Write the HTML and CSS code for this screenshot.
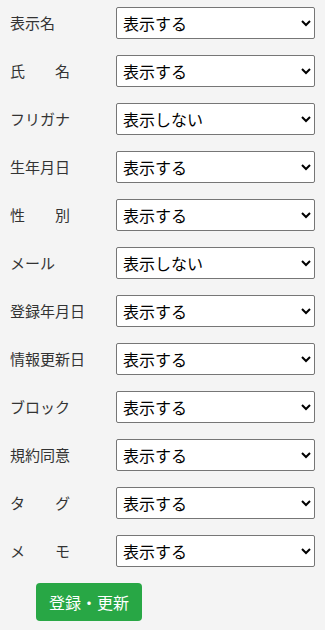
FILE: index.html
```html
<!DOCTYPE html>
<html lang="ja">
<head>
<meta charset="utf-8">
<link rel="stylesheet" href="styles.css">
</head>
<body>
<form class="form">
  <div class="row"><label class="label">表示名</label><select class="sel"><option>表示する</option><option>表示しない</option></select></div>
  <div class="row"><label class="label">氏　　名</label><select class="sel"><option>表示する</option><option>表示しない</option></select></div>
  <div class="row"><label class="label">フリガナ</label><select class="sel"><option>表示する</option><option selected>表示しない</option></select></div>
  <div class="row"><label class="label">生年月日</label><select class="sel"><option>表示する</option><option>表示しない</option></select></div>
  <div class="row"><label class="label">性　　別</label><select class="sel"><option>表示する</option><option>表示しない</option></select></div>
  <div class="row"><label class="label">メール</label><select class="sel"><option>表示する</option><option selected>表示しない</option></select></div>
  <div class="row"><label class="label">登録年月日</label><select class="sel"><option>表示する</option><option>表示しない</option></select></div>
  <div class="row"><label class="label">情報更新日</label><select class="sel"><option>表示する</option><option>表示しない</option></select></div>
  <div class="row"><label class="label">ブロック</label><select class="sel"><option>表示する</option><option>表示しない</option></select></div>
  <div class="row"><label class="label">規約同意</label><select class="sel"><option>表示する</option><option>表示しない</option></select></div>
  <div class="row"><label class="label">タ　　グ</label><select class="sel"><option>表示する</option><option>表示しない</option></select></div>
  <div class="row"><label class="label">メ　　モ</label><select class="sel"><option>表示する</option><option>表示しない</option></select></div>
  <div class="actions"><button type="button" class="btn">登録・更新</button></div>
</form>
</body>
</html>
```
FILE: styles.css
```css
html, body {
  margin: 0;
  padding: 0;
  background: #f4f4f4;
}
body {
  font-family: "Noto Sans CJK JP", "Noto Sans", sans-serif;
  font-size: 16px;
  color: #333;
}
.form {
  display: flex;
  flex-direction: column;
  gap: 16px;
  padding: 7px 10px 9px 10px;
}
.row {
  display: flex;
  align-items: center;
  height: 32px;
}
.label {
  width: 106px;
  flex: none;
  font-size: 15px;
  line-height: 20px;
  color: #333;
}
.sel {
  width: 199px;
  height: 32px;
  box-sizing: border-box;
  font-family: "Noto Sans CJK JP", "Noto Sans", sans-serif;
  font-size: 16px;
  color: #000;
  background: #fff;
  border: 1px solid #767676;
  border-radius: 2px;
  padding: 0 0 0 2px;
  margin: 0;
}
.actions {
  display: flex;
  padding-left: 26px;
}
.btn {
  width: 106px;
  height: 38px;
  background: #28a745;
  border: none;
  border-radius: 4px;
  color: #fff;
  font-family: "Noto Sans CJK JP", "Noto Sans", sans-serif;
  font-size: 16px;
  padding: 0;
  cursor: pointer;
}
```
